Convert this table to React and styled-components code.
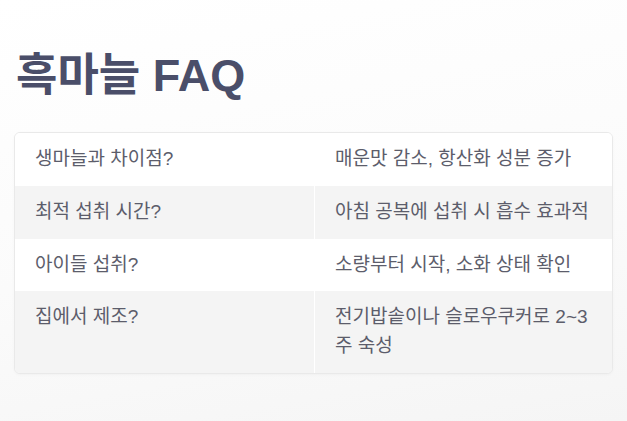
import React from "react";
import styled, { createGlobalStyle } from "styled-components";

const GlobalStyle = createGlobalStyle`
  html, body {
    margin: 0;
    padding: 0;
  }
  body {
    font-family: "Liberation Sans", "Noto Sans CJK KR", sans-serif;
    background: linear-gradient(170deg, #ffffff 0%, #fbfbfb 55%, #f5f5f5 100%);
    min-height: 100vh;
  }
`;

const Page = styled.div`
  padding: 52px 14px 40px;
`;

const Title = styled.h1`
  margin: 0 0 32px 2px;
  font-size: 45px;
  line-height: 48px;
  font-weight: 600;
  color: #4a4e69;
`;

const Table = styled.div`
  display: grid;
  grid-template-columns: 300px 1fr;
  border: 1px solid #e9e9e9;
  border-radius: 6px;
  overflow: hidden;
  background: #fff;
  box-shadow: 0 1px 3px rgba(0, 0, 0, 0.03);
`;

const Cell = styled.div`
  padding: 12px 20px;
  font-size: 19px;
  line-height: 28.8px;
  color: #5c5d6b;
  background: ${(p) => (p.$alt ? "#f4f4f4" : "#ffffff")};
  border-right: ${(p) => (p.$first ? "1px solid #ffffff" : "none")};
`;

const faqs = [
  ["생마늘과 차이점?", "매운맛 감소, 항산화 성분 증가"],
  ["최적 섭취 시간?", "아침 공복에 섭취 시 흡수 효과적"],
  ["아이들 섭취?", "소량부터 시작, 소화 상태 확인"],
  ["집에서 제조?", "전기밥솥이나 슬로우쿠커로 2~3주 숙성"],
];

export default function App() {
  return (
    <>
      <GlobalStyle />
      <Page>
        <Title>흑마늘 FAQ</Title>
        <Table>
          {faqs.map(([q, a], idx) => (
            <React.Fragment key={idx}>
              <Cell $alt={idx % 2 === 1} $first>
                {q}
              </Cell>
              <Cell $alt={idx % 2 === 1}>{a}</Cell>
            </React.Fragment>
          ))}
        </Table>
      </Page>
    </>
  );
}
